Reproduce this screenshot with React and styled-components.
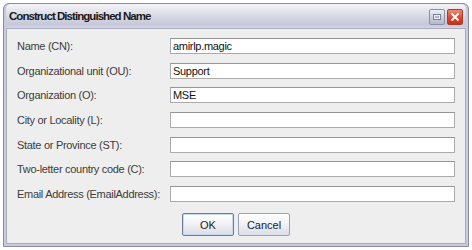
import React from 'react'
import styled, { createGlobalStyle } from 'styled-components'

const GlobalStyle = createGlobalStyle`
  body {
    margin: 0;
    background: #ffffff;
  }
`;

const Window = styled.div`
  width: 466px;
  height: 244px;
  margin: 3px 0 0 3px;
  box-sizing: border-box;
  border: 1px solid #8a8ca4;
  border-radius: 6px 6px 0 0;
  background: #c9cbdc;
  padding: 0 2px 2px 2px;
  display: flex;
  flex-direction: column;
`;

const TitleBar = styled.div`
  height: 24px;
  display: flex;
  align-items: center;
  justify-content: space-between;
  padding: 0 3px 0 3px;
  border-radius: 5px 5px 0 0;
  background: linear-gradient(#f4f4f8 0%, #e0e1ea 35%, #c6c8d9 85%, #d4d5e2 100%);
`;

const Title = styled.span`
  font-family: "Liberation Sans", Arial, sans-serif;
  font-weight: bold;
  font-size: 11.5px;
  color: #1a1a1a;
  letter-spacing: -0.95px;
`;

const Controls = styled.div`
  display: flex;
  gap: 2px;
  padding-top: 1px;
`;

const CtrlButton = styled.div`
  width: 16px;
  height: 16px;
  box-sizing: border-box;
  border-radius: 2px;
  border: 1px solid ${p => (p.close ? '#b03a2a' : '#8b8fa8')};
  background: ${p =>
    p.close
      ? 'linear-gradient(#f08a72, #d8442c 60%, #c8321e)'
      : 'linear-gradient(#eef0f8, #c8ccdc 60%, #b4b8cc)'};
  display: flex;
  align-items: center;
  justify-content: center;
`;

const Content = styled.div`
  flex: 1;
  background: #eeeeee;
  border: 1px solid #a9abbf;
  padding: 9px 10px 0 10px;
  display: flex;
  flex-direction: column;
`;

const Form = styled.div`
  display: grid;
  grid-template-columns: 153px 1fr;
  row-gap: 8.7px;
  align-items: center;
`;

const Label = styled.label`
  font-family: "Liberation Sans", Arial, sans-serif;
  font-size: 11px;
  letter-spacing: -0.3px;
  color: #3c3c3c;
`;

const Field = styled.input`
  height: 16px;
  box-sizing: border-box;
  border: 1px solid #ababab;
  border-top-color: #949494;
  background: #ffffff;
  padding: 0 2px;
  font-family: "Liberation Sans", Arial, sans-serif;
  font-size: 11px;
  letter-spacing: -0.3px;
  color: #111111;
  outline: none;
`;

const Buttons = styled.div`
  display: flex;
  justify-content: center;
  gap: 4px;
  margin-top: 11px;
`;

const Button = styled.button`
  width: 52px;
  height: 23px;
  box-sizing: border-box;
  border: 1px solid ${p => (p.primary ? '#6a7c98' : '#97a3b6')};
  box-shadow: ${p => (p.primary ? 'inset 0 0 0 1px #c8d8ee' : 'none')};
  border-radius: 2px;
  background: linear-gradient(#ffffff, #f2f3f6 45%, #d9dde6);
  font-family: "Liberation Sans", Arial, sans-serif;
  font-size: 11px;
  color: #222222;
  padding: 0;
`;

const fields = [
  ['Name (CN):', 'amirlp.magic'],
  ['Organizational unit (OU):', 'Support'],
  ['Organization (O):', 'MSE'],
  ['City or Locality (L):', ''],
  ['State or Province (ST):', ''],
  ['Two-letter country code (C):', ''],
  ['Email Address (EmailAddress):', ''],
];

export default function App() {
  return (
    <>
      <GlobalStyle />
      <Window>
        <TitleBar>
          <Title>Construct Distinguished Name</Title>
          <Controls>
            <CtrlButton>
              <svg width="8" height="6" viewBox="0 0 8 6">
                <rect x="0.5" y="0.5" width="7" height="5" fill="#e8eaf2" stroke="#7c8098" />
                <rect x="2" y="2.5" width="4" height="1" fill="#7c8098" />
              </svg>
            </CtrlButton>
            <CtrlButton close>
              <svg width="10" height="10" viewBox="0 0 10 10">
                <path d="M1.5 1.5 L8.5 8.5 M8.5 1.5 L1.5 8.5" stroke="#ffffff" strokeWidth="1.8" />
              </svg>
            </CtrlButton>
          </Controls>
        </TitleBar>
        <Content>
          <Form>
            {fields.map(([label, value]) => (
              <React.Fragment key={label}>
                <Label>{label}</Label>
                <Field defaultValue={value} />
              </React.Fragment>
            ))}
          </Form>
          <Buttons>
            <Button primary>OK</Button>
            <Button>Cancel</Button>
          </Buttons>
        </Content>
      </Window>
    </>
  )
}
